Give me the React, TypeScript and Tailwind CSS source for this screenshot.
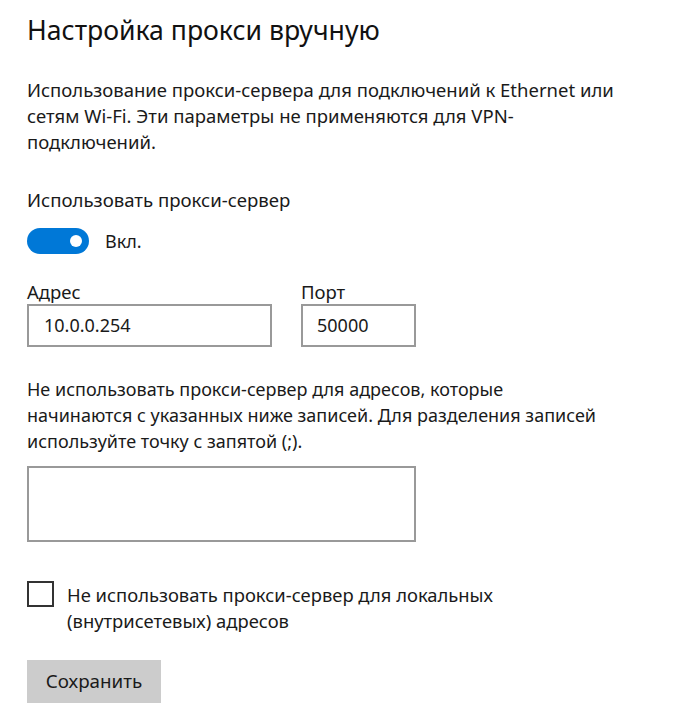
import React from "react";

export default function App() {
  return (
    <div
      className="w-[673px] h-[711px] bg-white text-black pl-[27px] pt-[14px] overflow-hidden whitespace-nowrap"
      style={{ fontFamily: '"Noto Sans", "Open Sans", sans-serif' }}
    >
      <h1 className="text-[26.6px] leading-[32px] font-normal text-[#111]">Настройка прокси вручную</h1>

      <p className="mt-[31px] text-[18.5px] leading-[26px] text-[#1a1a1a]">
        Использование прокси-сервера для подключений к Ethernet или
        <br />
        сетям Wi-Fi. Эти параметры не применяются для VPN-
        <br />
        подключений.
      </p>

      <div className="mt-[32px] text-[18.6px] leading-[26px] text-[#1a1a1a]">Использовать прокси-сервер</div>

      <div className="mt-[15px] flex items-center gap-[16px]">
        <div className="relative w-[62px] h-[26px] rounded-full bg-[#0078d7]">
          <div className="absolute right-[7px] top-[7px] w-[12px] h-[12px] rounded-full bg-white" />
        </div>
        <span className="text-[18px] leading-[26px] text-[#1a1a1a]">Вкл.</span>
      </div>

      <div className="mt-[26px] flex gap-[29px]">
        <div className="flex flex-col">
          <label className="text-[18.5px] leading-[24px] text-[#1a1a1a]">Адрес</label>
          <div className="w-[245px] h-[43px] border-2 border-[#999] flex items-center pl-[15px] text-[18px] text-[#1a1a1a]">
            10.0.0.254
          </div>
        </div>
        <div className="flex flex-col">
          <label className="text-[18.5px] leading-[24px] text-[#1a1a1a]">Порт</label>
          <div className="w-[115px] h-[43px] border-2 border-[#999] flex items-center pl-[14px] text-[18px] text-[#1a1a1a]">
            50000
          </div>
        </div>
      </div>

      <p className="mt-[29px] text-[18px] leading-[26px] text-[#1a1a1a]">
        Не использовать прокси-сервер для адресов, которые
        <br />
        начинаются с указанных ниже записей. Для разделения записей
        <br />
        используйте точку с запятой (;).
      </p>

      <div className="mt-[12px] w-[389px] h-[76px] border-2 border-[#999]" />

      <div className="mt-[39px] flex items-start gap-[13px]">
        <div className="w-[27px] h-[26px] border-2 border-[#333] shrink-0" />
        <div className="text-[18.4px] leading-[26px] text-[#1a1a1a] mt-[1px]">
          Не использовать прокси-сервер для локальных
          <br />
          (внутрисетевых) адресов
        </div>
      </div>

      <button className="mt-[26px] w-[134px] h-[43px] bg-[#cccccc] text-[18.8px] text-[#1a1a1a] flex items-center justify-center">
        Сохранить
      </button>
    </div>
  );
}
